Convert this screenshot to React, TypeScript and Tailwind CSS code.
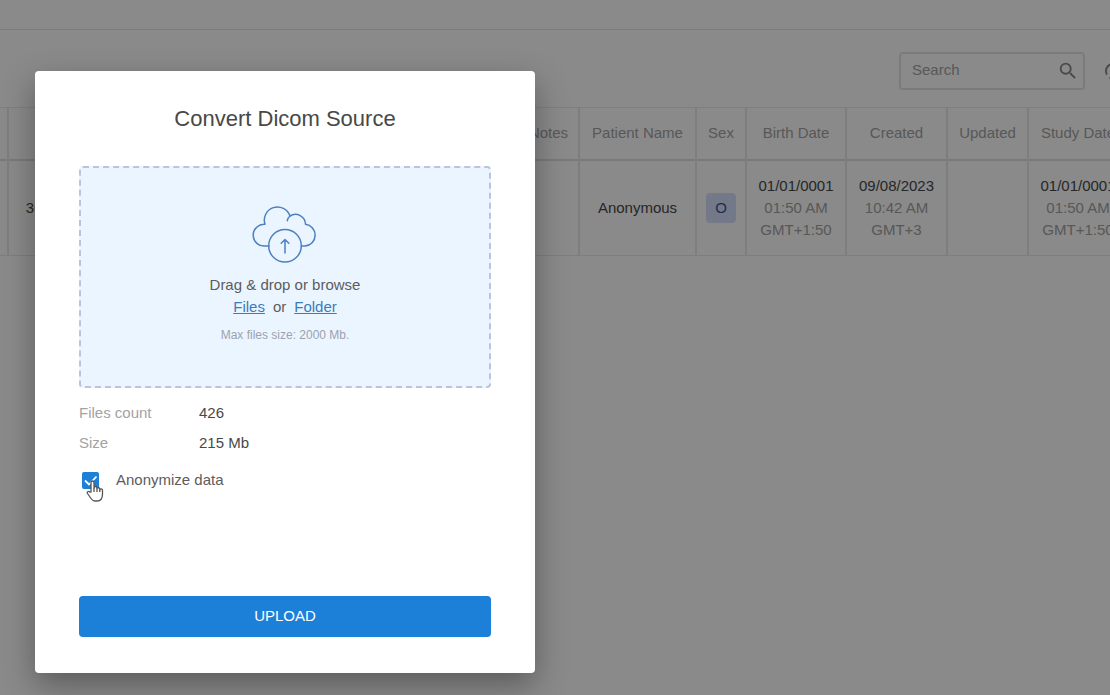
import { useState } from "react";
import { MdAutorenew, MdSearch } from "react-icons/md";

type Column = {
    label: string;
    width: string;
    lines: string[];
    badge?: boolean;
};

const columns: Column[] = [
    { label: "", width: "w-2", lines: [] },
    { label: "", width: "w-[52px]", lines: ["36"] },
    { label: "", width: "w-[458px]", lines: [] },
    { label: "Notes", width: "w-[61px]", lines: [] },
    { label: "Patient Name", width: "w-[117px]", lines: ["Anonymous"] },
    { label: "Sex", width: "w-[50px]", lines: ["O"], badge: true },
    { label: "Birth Date", width: "w-[100px]", lines: ["01/01/0001", "01:50 AM", "GMT+1:50"] },
    { label: "Created", width: "w-[101px]", lines: ["09/08/2023", "10:42 AM", "GMT+3"] },
    { label: "Updated", width: "w-[81px]", lines: [] },
    { label: "Study Date", width: "w-[100px]", lines: ["01/01/0001", "01:50 AM", "GMT+1:50"] },
];

function Toolbar() {
    return (
        <div className="flex h-[77px] items-center justify-end pt-1">
            <label className="flex h-[38px] w-[186px] items-center rounded-sm border-2 border-[#e4e4e4] pr-1 pl-[11px]">
                <input
                    type="text"
                    aria-label="Search"
                    placeholder="Search"
                    className="min-w-0 flex-1 bg-transparent outline-none placeholder:text-[#a3a3a3]"
                />
                <MdSearch className="size-[22px] text-[#8a8a8a]" />
            </label>
            <button type="button" aria-label="Refresh" className="-mr-[15px] ml-4 shrink-0 text-[#8a8a8a]">
                <MdAutorenew className="size-6" />
            </button>
        </div>
    );
}

function StudyTable() {
    return (
        <table className="w-[1128px] table-fixed border-collapse text-center">
            <thead>
                <tr className="h-[52px] border-t border-b-2 border-[#ebebeb] border-b-[#e0e0e0]">
                    {columns.map((col, i) => (
                        <th key={i} scope="col" className={`${col.width} border-r-2 border-[#e9e9e9] p-0 font-normal whitespace-nowrap text-[#a3a3a3]`}>
                            {col.label}
                        </th>
                    ))}
                </tr>
            </thead>
            <tbody>
                <tr className="h-24 border-b border-[#e9e9e9]">
                    {columns.map((col, i) => (
                        <td key={i} className="border-r-2 border-[#e9e9e9] p-0 leading-[22px] whitespace-nowrap">
                            {col.lines.map((line, n) => (
                                <div key={n} className={n === 0 ? "text-[#484848]" : "text-[#a3a3a3]"}>
                                    {col.badge ? (
                                        <span className="inline-flex size-[30px] items-center justify-center rounded-sm bg-[#d6e0ff] text-[#385494]">{line}</span>
                                    ) : (
                                        line
                                    )}
                                </div>
                            ))}
                        </td>
                    ))}
                </tr>
            </tbody>
        </table>
    );
}

function CloudUploadIcon() {
    return (
        <svg viewBox="0 0 66 58" className="h-[58px] w-[66px]" fill="none" stroke="#4d80c0" strokeWidth="1.5" strokeLinecap="round" strokeLinejoin="round">
            <path d="M17 40H13.300A10.900 10.900 0 1 1 13 18.300A12.700 12.700 0 1 1 38 10A10.100 10.100 0 0 1 53.500 18.300A10.900 10.900 0 0 1 53 40H49.500" />
            <path d="M38 10Q35.800 11.800 35.300 14.700" />
            <circle cx="33" cy="39.700" r="16.300" />
            <path d="M33 47V33.500M29.200 37.300l3.800-3.800 3.800 3.800" />
        </svg>
    );
}

function HandCursor() {
    return (
        <svg viewBox="0 0 18 22" className="pointer-events-none absolute top-2 left-1 h-[22px] w-[18px]" fill="#fff" stroke="#555" strokeWidth="1.3" strokeLinejoin="round">
            <path d="M5 12V2.500a1.500 1.500 0 0 1 3 0V8a1.500 1.500 0 0 1 3 0v.5a1.500 1.500 0 0 1 2.800.5v.5a1.500 1.500 0 0 1 2.700.8V14c0 4-2 7-5.500 7H9c-2 0-3-1-4-2.500L1.500 13.500c-1-1.500 1-2.800 2-1.700z" />
            <path d="M8 8v4M11 8.500V12M13.800 9.500V12" fill="none" />
        </svg>
    );
}

function ConvertDialog() {
    const [anonymize, setAnonymize] = useState(true);

    return (
        <div
            role="dialog"
            aria-modal="true"
            aria-labelledby="dialog-title"
            className="flex min-h-[602px] w-[500px] max-w-full flex-col rounded-sm bg-white px-11 pt-8 pb-9 shadow-[0_12px_32px_rgba(0,0,0,0.34)]"
        >
            <h1 id="dialog-title" className="text-center text-[22px] leading-8 text-[#484848]">
                Convert Dicom Source
            </h1>

            <div className="mt-[31px] flex h-[222px] flex-col items-center rounded-sm border-2 border-dashed border-[#bcc3dc] bg-[#ebf5ff] pt-[38px] text-[#5c5c60]">
                <CloudUploadIcon />
                <p className="mt-2.5 leading-[22px]">Drag &amp; drop or browse</p>
                <p className="flex gap-2 leading-[22px]">
                    <a href="#files" className="text-[#3a7cbd] underline">Files</a>
                    or
                    <a href="#folder" className="text-[#3a7cbd] underline">Folder</a>
                </p>
                <p className="mt-[7px] text-xs leading-5 text-[#9da2ae]">Max files size: 2000 Mb.</p>
            </div>

            <dl className="mt-2.5 grid grid-cols-[120px_1fr] leading-[30px]">
                <dt className="text-[#a3a3a3]">Files count</dt>
                <dd className="text-[#484848]">426</dd>
                <dt className="text-[#a3a3a3]">Size</dt>
                <dd className="text-[#484848]">215 Mb</dd>
            </dl>

            <label className="mt-2.5 flex items-center gap-[17px] pl-[3px] leading-6 text-[#5c5c60]">
                <span className="relative size-[17px]">
                    <input
                        type="checkbox"
                        checked={anonymize}
                        onChange={(e) => setAnonymize(e.target.checked)}
                        className="peer block size-[17px] appearance-none rounded-xs border-2 border-[#1c7fd8] checked:bg-[#1c7fd8]"
                    />
                    <svg viewBox="0 0 17 17" className="pointer-events-none absolute inset-0 hidden peer-checked:block" fill="none" stroke="#fff" strokeWidth="1.8">
                        <path d="M3 8.500l4 4 7.500-8" />
                    </svg>
                    <HandCursor />
                </span>
                Anonymize data
            </label>

            <button type="button" className="mt-auto h-[41px] rounded-sm bg-[#1c7fd8] text-white">
                UPLOAD
            </button>
        </div>
    );
}

export default function App() {
    return (
        <div className="relative flex min-h-screen flex-col overflow-hidden bg-white font-['Liberation_Sans',Arial,sans-serif] text-[15px]">
            <header className="h-[30px] shrink-0 border-b border-[#e4e4e4]" />
            <main className="overflow-hidden">
                <Toolbar />
                <StudyTable />
            </main>
            <div className="absolute inset-0 flex items-start bg-black/46 pt-[71px] pl-[35px]">
                <ConvertDialog />
            </div>
        </div>
    );
}
